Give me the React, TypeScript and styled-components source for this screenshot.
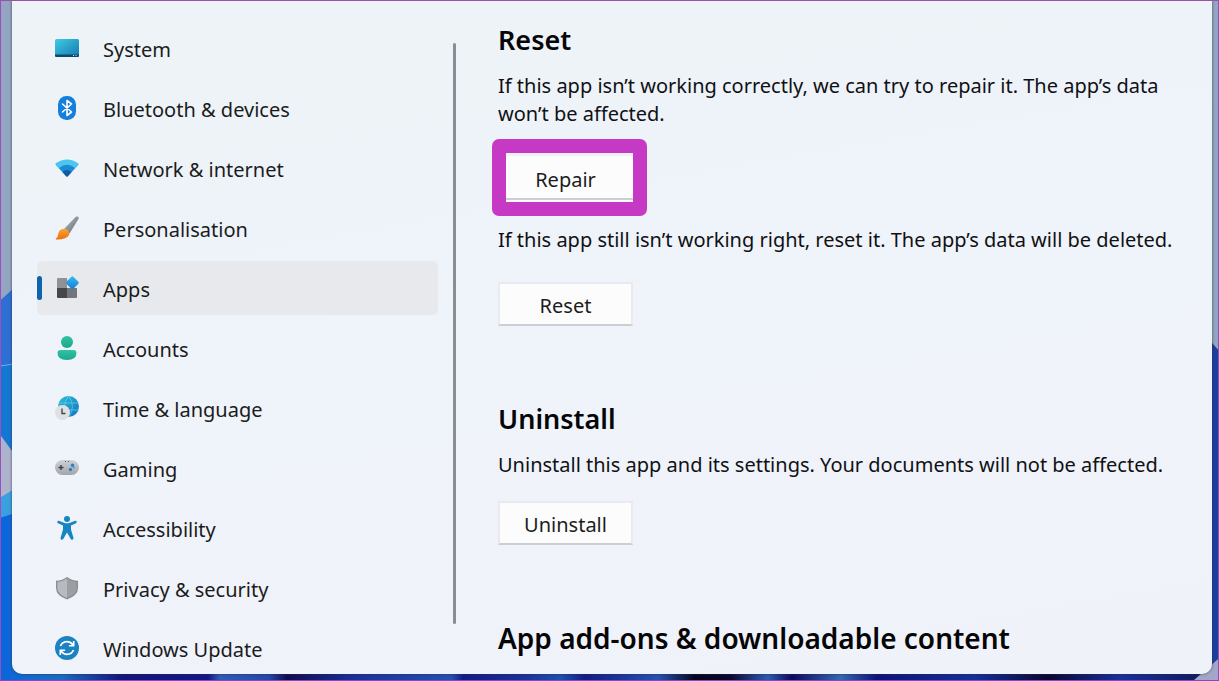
import React from "react";
import styled, { createGlobalStyle } from "styled-components";

const GlobalStyle = createGlobalStyle`
  *, *::before, *::after { box-sizing: border-box; }
  body {
    margin: 0;
    font-family: "Noto Sans", "Open Sans", sans-serif;
    font-size: 20px;
    color: #1b1c20;
  }
`;

const Desktop = styled.div`
  position: relative;
  display: flex;
  height: 100vh;
  padding: 0 6px 6px 11px;
  border: 1px solid;
  border-color: #a04fa8 #8f4cc0 #8b45c8 #9a50c4;
  overflow: hidden;
  background: #15208a;
`;

const Wallpaper = styled.svg`
  position: absolute;
  inset: 0;
  width: 100%;
  height: 100%;
`;

const Window = styled.div`
  position: relative;
  display: flex;
  flex: 1;
  min-width: 0;
  overflow: hidden;
  border-radius: 0 0 10px 10px;
  background: linear-gradient(170deg, #edf3f7 0%, #eff3fa 45%, #f0f2f9 100%);
  box-shadow: 0 0 3px rgba(40, 50, 70, 0.8);
`;

const Sidebar = styled.nav`
  flex: 0 0 426px;
  padding: 20px 0 0 25px;
`;

const NavList = styled.ul`
  display: flex;
  flex-direction: column;
  gap: 6px;
  margin: 0;
  padding: 0;
  list-style: none;
`;

const NavLink = styled.a<{ $active?: boolean }>`
  display: flex;
  align-items: center;
  height: 54px;
  border-radius: 6px;
  color: inherit;
  text-decoration: none;
  background: ${(p) => (p.$active ? "#e7e9ed" : "transparent")};
`;

const ActiveBar = styled.span<{ $active?: boolean }>`
  width: 5px;
  height: 24px;
  margin-right: 12px;
  border-radius: 3px;
  background: ${(p) => (p.$active ? "#0a64b0" : "transparent")};
`;

const NavIcon = styled.svg`
  flex: none;
  width: 26px;
  height: 26px;
  margin-right: 23px;
`;

const NavLabel = styled.span`
  padding-top: 2px;
`;

const Divider = styled.div`
  flex: 0 0 3px;
  margin: 42px 0 50px 15px;
  border-radius: 2px;
  background: #8a8d95;
`;

const Content = styled.main`
  flex: 1;
  min-width: 0;
  padding: 20px 20px 0 42px;
  color: #101114;
`;

const Section = styled.section`
  display: flex;
  flex-direction: column;
  align-items: flex-start;
  margin-bottom: 74px;
`;

const Heading = styled.h2<{ $large?: boolean }>`
  margin: 0 0 13px;
  font-size: ${(p) => (p.$large ? 28 : 27)}px;
  line-height: 38px;
  font-weight: 600;
  color: #060608;
`;

const Text = styled.p`
  margin: 0;
  line-height: 28px;
`;

const Button = styled.button<{ $gap?: number }>`
  width: 135px;
  height: 44px;
  margin: ${(p) => p.$gap ?? 0}px 0 0;
  padding: 2px 0 0;
  border: 2px solid #e9eaef;
  border-bottom-color: #cdced2;
  background: #fcfcfd;
  font: inherit;
  color: #1b1c20;
`;

const Highlight = styled.div`
  margin: 11px 0 10px -6px;
  padding: 14px;
  border-radius: 7px;
  background: #c539c5;

  ${Button} {
    display: block;
    width: 127px;
    height: 49px;
    padding: 4px 8px 0 0;
    border: 0;
    box-shadow: inset 0 -2px #fcfcfd, inset 0 -4px #cdced2, inset 0 3px #f1f1f5;
  }
`;

const icons: Record<string, React.ReactNode> = {
  System: (
    <>
      <defs>
        <linearGradient id="sys" x1="0" y1="0" x2="1" y2="1">
          <stop offset="0" stopColor="#41cbe4" />
          <stop offset="1" stopColor="#1379b0" />
        </linearGradient>
      </defs>
      <rect x="1" y="4" width="24" height="18" rx="1.500" fill="url(#sys)" />
      <path d="M1 19.500h24v1a1.500 1.500 0 0 1-1.500 1.500h-21A1.500 1.500 0 0 1 1 20.500z" fill="#0e4a70" />
      <path d="M19 20.500h1M21.500 20.500h1" stroke="#bfe6f5" strokeWidth="1" />
    </>
  ),
  "Bluetooth & devices": (
    <>
      <rect x="4" y="1" width="18" height="24" rx="8.500" fill="#147fdc" />
      <path d="M8.500 9l9 8-4.500 3.500v-15L17.500 9l-9 8" fill="none" stroke="#fff" strokeWidth="1.600" strokeLinejoin="round" strokeLinecap="round" />
    </>
  ),
  "Network & internet": (
    <>
      <path d="M1.500 8.500Q13 .5 24.500 8.500 24.800 9.500 24 10.500L14 21Q13 22 12 21L2 10.500Q1.200 9.500 1.500 8.500z" fill="#4cc6ee" />
      <path d="M5 13Q13 6.500 21 13L14 21Q13 22 12 21z" fill="#1c8bd6" />
      <path d="M8.500 16.900Q13 13 17.500 16.900L14 21Q13 22 12 21z" fill="#145a9c" />
    </>
  ),
  Personalisation: (
    <>
      <defs>
        <linearGradient id="brush" x1="0" y1="0" x2="1" y2="1">
          <stop offset="0" stopColor="#b9bcc0" />
          <stop offset="1" stopColor="#65696f" />
        </linearGradient>
        <linearGradient id="tip" x1="0" y1="0" x2="0" y2="1">
          <stop offset="0" stopColor="#fba432" />
          <stop offset="1" stopColor="#e8720c" />
        </linearGradient>
      </defs>
      <path d="M21.800 1.800q3.500-1.300 2.800 2L15.500 18.500l-5.500-4.500z" fill="url(#brush)" />
      <path d="M9.500 13.800q6 .5 5.800 6Q12.500 24.800 2 24.500q-.8-.4.200-1.200Q4 22 4.200 19 5 14.300 9.500 13.800z" fill="url(#tip)" />
    </>
  ),
  Apps: (
    <>
      <defs>
        <linearGradient id="gem" x1="0" y1="0" x2="0" y2="1">
          <stop offset="0" stopColor="#3bb8f3" />
          <stop offset="1" stopColor="#157fd0" />
        </linearGradient>
      </defs>
      <path d="M4 3h9v10H3V4q0-1 1-1z" fill="#8f9197" />
      <path d="M3 13h10v10H4q-1 0-1-1z" fill="#45474d" />
      <path d="M13 13h10v9q0 1-1 1h-9z" fill="#74767c" />
      <path d="M17.300 1.800q1-.9 2 0l5 5q.9 1 0 2l-5 5q-1 .9-2 0l-5-5q-.9-1 0-2z" fill="url(#gem)" />
    </>
  ),
  Accounts: (
    <>
      <defs>
        <linearGradient id="person" x1="0" y1="0" x2="0" y2="1">
          <stop offset="0" stopColor="#32c3a2" />
          <stop offset="1" stopColor="#1aa88c" />
        </linearGradient>
      </defs>
      <circle cx="13" cy="7" r="6" fill="url(#person)" />
      <path d="M6.500 15h13q3 0 3 3 0 7-9.500 7t-9.500-7q0-3 3-3z" fill="url(#person)" />
    </>
  ),
  "Time & language": (
    <>
      <defs>
        <linearGradient id="globe" x1="0" y1="0" x2="1" y2="1">
          <stop offset="0" stopColor="#2cc0d8" />
          <stop offset="1" stopColor="#1673c4" />
        </linearGradient>
      </defs>
      <circle cx="14.500" cy="11.500" r="10.500" fill="url(#globe)" />
      <path d="M4.500 8h20M5 15h19.500M14.500 1q-8 10.500 0 21M14.500 1q8 10.500 0 21" fill="none" stroke="#6fd6ea" strokeWidth=".6" />
      <circle cx="8.500" cy="17.500" r="7.500" fill="#dfe0e3" />
      <path d="M8 13.500v5h3.500" fill="none" stroke="#44474d" strokeWidth="1.400" />
    </>
  ),
  Gaming: (
    <>
      <defs>
        <linearGradient id="pad" x1="0" y1="0" x2="0" y2="1">
          <stop offset="0" stopColor="#cfd1d5" />
          <stop offset="1" stopColor="#a2a5ab" />
        </linearGradient>
      </defs>
      <rect x="1" y="5" width="24" height="15" rx="7.500" fill="url(#pad)" />
      <path d="M4.500 12.500h5M7 10v5" stroke="#3d4046" strokeWidth="1.400" />
      <path d="M11 6.500h1M14 6.500h1" stroke="#55585e" strokeWidth="1.200" />
      <circle cx="18.500" cy="10.300" r="1.700" fill="#2580cc" />
      <circle cx="16.500" cy="14.500" r="1.700" fill="#2580cc" />
      <circle cx="19.800" cy="12.500" r=".8" fill="#2580cc" />
    </>
  ),
  Accessibility: (
    <>
      <circle cx="13" cy="4" r="3" fill="#1785c4" />
      <path d="M4.800 5.700 10 7.700q3 1 6 0l5.200-2q1.500-.2 1.500 1.300 0 .8-.7 1.200l-5 2.300v4l2.500 8.500q0 1.500-1.200 1.800-1.200.2-1.700-1L13 17.500l-3.600 6.300q-.6 1.200-1.800 1-1.200-.4-1.100-1.800L9 14.500v-4L4 8.200q-.8-.4-.7-1.300 0-1.300 1.500-1.200z" fill="#1785c4" />
    </>
  ),
  "Privacy & security": (
    <>
      <path d="M13 2q4.500 3.500 11 3.800V13q0 7.500-11 11.500Q2 20.500 2 13V5.800Q8.500 5.500 13 2z" fill="#898c91" />
      <path d="M13 3.600q4 2.900 9.700 3.400V13q0 6.300-9.700 10z" fill="#9b9ea3" />
      <path d="M13 3.600Q9 6.500 3.300 7V13q0 6.300 9.700 10z" fill="#b7babe" />
    </>
  ),
  "Windows Update": (
    <>
      <circle cx="13" cy="13" r="12" fill="#1b83c2" />
      <path d="M6.500 11q1.800-4.300 6.500-4.300 3.700 0 6 3.300M19.500 15q-1.800 4.300-6.500 4.300-3.700 0-6-3.300" fill="none" stroke="#fff" strokeWidth="1.800" />
      <path d="M19.700 6v4.800h-4.800M6.300 20v-4.800h4.800" fill="none" stroke="#fff" strokeWidth="1.600" />
    </>
  ),
};

function Background() {
  return (
    <Wallpaper viewBox="0 0 1219 681" preserveAspectRatio="none" aria-hidden="true">
      <defs>
        <linearGradient id="bottom" x1="0" y1="0" x2="1" y2="0">
          <stop offset="0" stopColor="#0b66dc" />
          <stop offset=".05" stopColor="#1d6ac4" />
          <stop offset=".1" stopColor="#14147a" />
          <stop offset=".17" stopColor="#15158a" />
          <stop offset=".18" stopColor="#2f5cb8" />
          <stop offset=".22" stopColor="#2448a8" />
          <stop offset=".235" stopColor="#120a50" />
          <stop offset=".29" stopColor="#1a2f9c" />
          <stop offset=".37" stopColor="#2450b4" />
          <stop offset=".38" stopColor="#151a86" />
          <stop offset=".43" stopColor="#1a309c" />
          <stop offset=".46" stopColor="#1c50b0" />
          <stop offset=".48" stopColor="#151a86" />
          <stop offset=".54" stopColor="#2452b4" />
          <stop offset=".57" stopColor="#08041c" />
          <stop offset=".6" stopColor="#0c0830" />
          <stop offset=".63" stopColor="#2c5cb4" />
          <stop offset=".65" stopColor="#10085c" />
          <stop offset=".69" stopColor="#3468b4" />
          <stop offset=".72" stopColor="#10107a" />
          <stop offset=".8" stopColor="#14309c" />
          <stop offset=".86" stopColor="#0a0630" />
          <stop offset=".92" stopColor="#18309c" />
          <stop offset="1" stopColor="#101450" />
        </linearGradient>
      </defs>
      <rect width="1219" height="681" fill="url(#bottom)" />
      <path d="M0 0h1219v350l-7-8H13V288L0 300z" fill="#93a5c0" />
      <path d="M0 300l13-12v155L0 436z" fill="#2d6fd2" />
      <path d="M0 366l13-2v90L0 436z" fill="#1478d2" />
      <path d="M0 366l13-2" stroke="#6fb0e8" />
      <path d="M0 436l13 18v36L0 498z" fill="#adb3cb" />
      <path d="M0 498l13-8v24L0 518z" fill="#3aa0e0" />
      <path d="M1212 342l7 8v310l-7 6z" fill="#1b3fa0" />
      <path d="M1195 681l24-21v21z" fill="#a3a6c8" />
    </Wallpaper>
  );
}

export default function App() {
  return (
    <>
      <GlobalStyle />
      <Desktop>
        <Background />
        <Window>
          <Sidebar aria-label="Settings">
            <NavList>
              {Object.keys(icons).map((name) => {
                const active = name === "Apps";
                return (
                  <li key={name}>
                    <NavLink href="#" $active={active} aria-current={active ? "page" : undefined}>
                      <ActiveBar $active={active} />
                      <NavIcon viewBox="0 0 26 26" aria-hidden="true">{icons[name]}</NavIcon>
                      <NavLabel>{name}</NavLabel>
                    </NavLink>
                  </li>
                );
              })}
            </NavList>
          </Sidebar>
          <Divider />
          <Content>
            <Section>
              <Heading>Reset</Heading>
              <Text>
                If this app isn’t working correctly, we can try to repair it. The app’s data won’t be affected.
              </Text>
              <Highlight>
                <Button type="button">Repair</Button>
              </Highlight>
              <Text>If this app still isn’t working right, reset it. The app’s data will be deleted.</Text>
              <Button type="button" $gap={28}>Reset</Button>
            </Section>
            <Section>
              <Heading>Uninstall</Heading>
              <Text>Uninstall this app and its settings. Your documents will not be affected.</Text>
              <Button type="button" $gap={22}>Uninstall</Button>
            </Section>
            <Section>
              <Heading $large>App add-ons &amp; downloadable content</Heading>
            </Section>
          </Content>
        </Window>
      </Desktop>
    </>
  );
}
